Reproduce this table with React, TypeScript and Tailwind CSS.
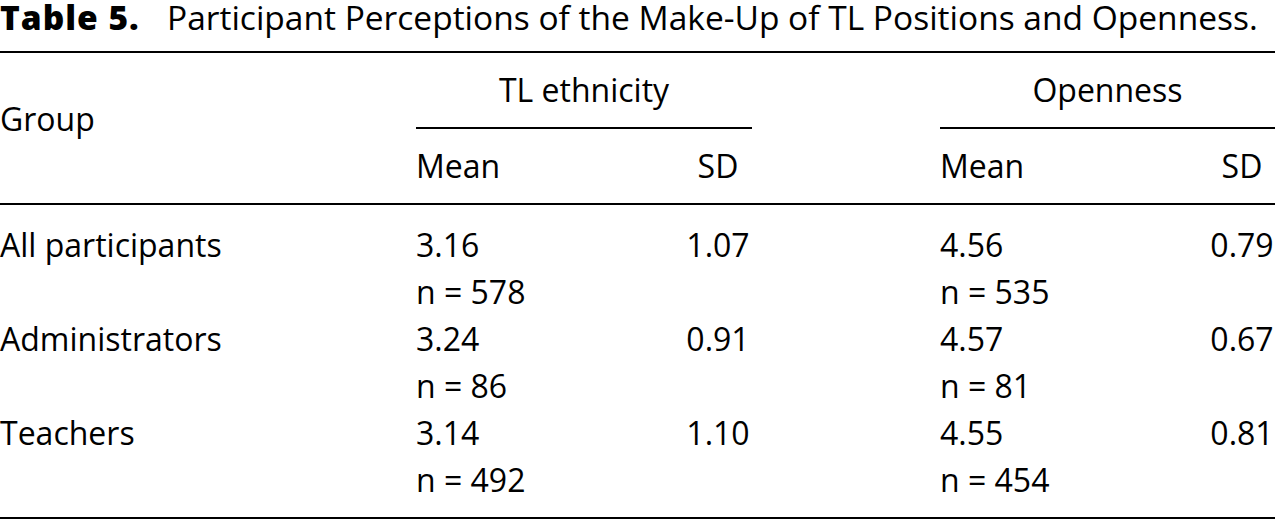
const rows = [
  { group: "All participants", tlMean: "3.16", tlN: "578", tlSd: "1.07", opMean: "4.56", opN: "535", opSd: "0.79" },
  { group: "Administrators", tlMean: "3.24", tlN: "86", tlSd: "0.91", opMean: "4.57", opN: "81", opSd: "0.67" },
  { group: "Teachers", tlMean: "3.14", tlN: "492", tlSd: "1.10", opMean: "4.55", opN: "454", opSd: "0.81" },
];

export default function App() {
  return (
    <div className="w-[1275px] h-[523px] bg-white text-black text-[32px] font-['Open_Sans',sans-serif] overflow-hidden">
      <div className="h-[51px] pt-[1px] text-[33.5px] leading-[32px] whitespace-nowrap">
        <span className="inline-block w-[167px] font-extrabold tracking-[1px]">Table 5.</span>
        <span>Participant Perceptions of the Make-Up of TL Positions and Openness.</span>
      </div>
      <div className="border-t-2 border-black" />

      {/* header */}
      <div className="grid grid-cols-[416px_268px_68px_188px_269px_66px]">
        <div className="row-span-2 flex items-center pb-[18px]">Group</div>
        <div className="col-span-2 h-[76px] border-b-2 border-black flex items-center justify-center">TL ethnicity</div>
        <div className="row-span-2" />
        <div className="col-span-2 h-[76px] border-b-2 border-black flex items-center justify-center">Openness</div>
        <div className="h-[74px] flex items-center">Mean</div>
        <div className="h-[74px] flex items-center justify-center">SD</div>
        <div className="h-[74px] flex items-center">Mean</div>
        <div className="h-[74px] flex items-center justify-center">SD</div>
      </div>
      <div className="border-t-2 border-black" />

      {/* body */}
      <div className="grid grid-cols-[416px_268px_68px_188px_269px_66px] leading-[47px] pt-[16px] pb-[14px]">
        {rows.map((r) => (
          <div key={r.group} className="contents">
            <div>{r.group}</div>
            <div>
              <div>{r.tlMean}</div>
              <div>n = {r.tlN}</div>
            </div>
            <div className="text-center">{r.tlSd}</div>
            <div />
            <div>
              <div>{r.opMean}</div>
              <div>n = {r.opN}</div>
            </div>
            <div className="text-center">{r.opSd}</div>
          </div>
        ))}
      </div>
      <div className="border-t-2 border-black" />
    </div>
  );
}
